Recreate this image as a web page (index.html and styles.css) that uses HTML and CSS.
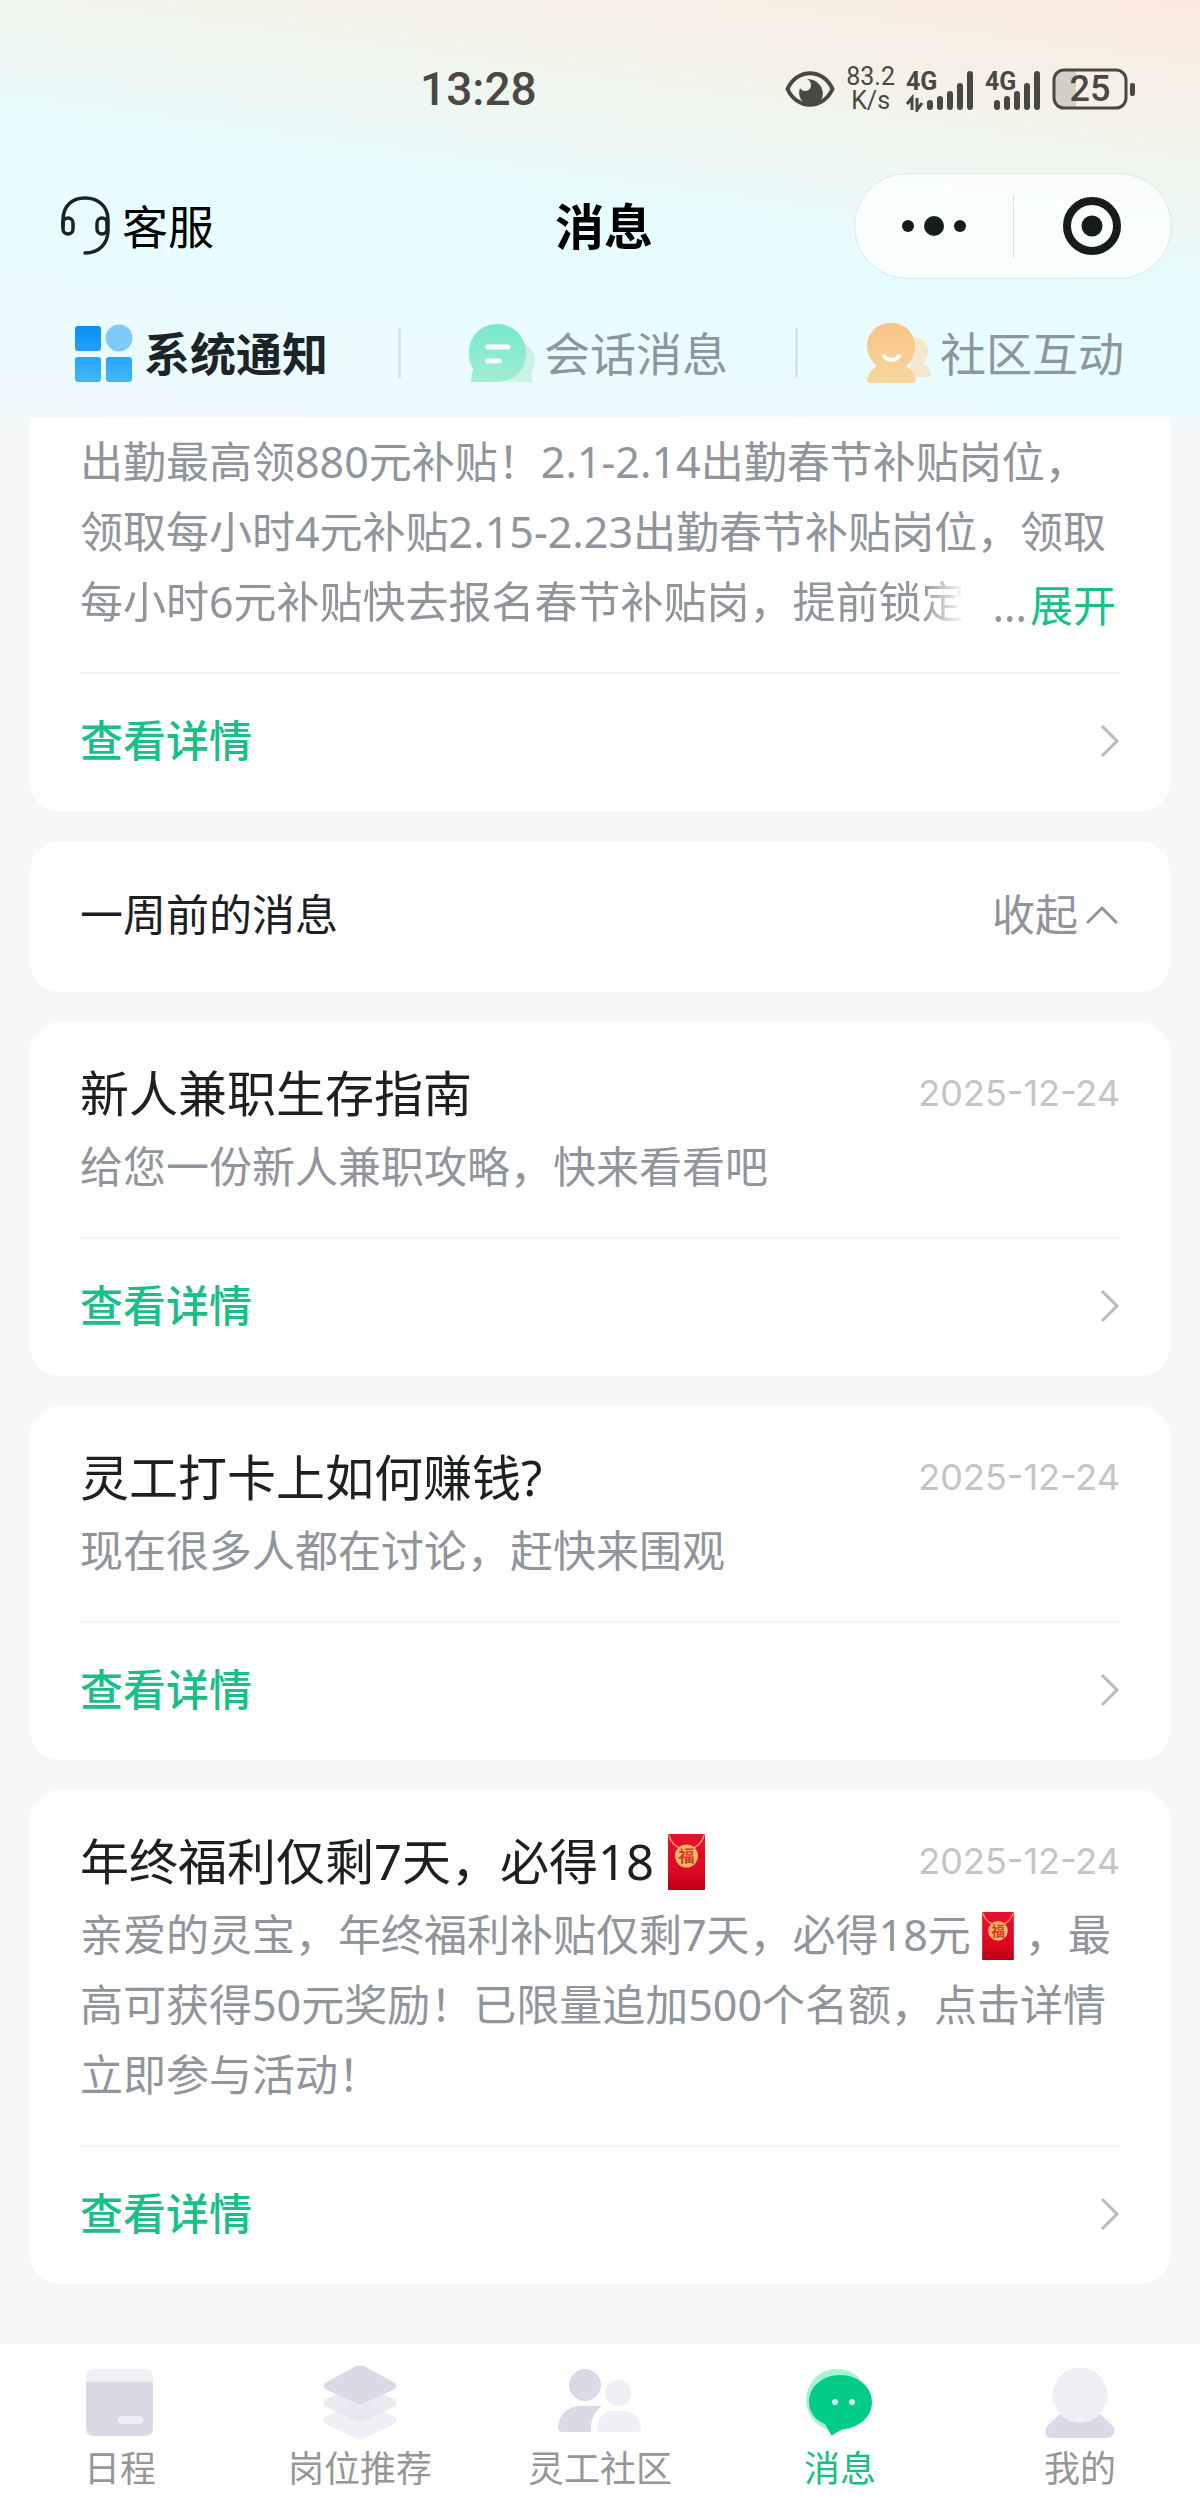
FILE: index.html
```html
<!DOCTYPE html>
<html lang="zh-CN">
<head>
<meta charset="utf-8">
<meta name="viewport" content="width=device-width, initial-scale=1">
<title>消息</title>
<link rel="stylesheet" href="styles.css">
</head>
<body>
<svg class="sprite" aria-hidden="true">
  <defs>
    <linearGradient id="packet-red" x1="0" y1="0" x2="0" y2="1">
      <stop offset="0" stop-color="#e8112f"/><stop offset="0.7" stop-color="#dd0722"/><stop offset="1" stop-color="#b80013"/>
    </linearGradient>
    <symbol id="packet" viewBox="0 0 37 56">
      <rect width="37" height="56" rx="1" fill="url(#packet-red)"/>
      <path d="M1 1C3 10 10 15 18.500 15S34 10 36 1" fill="none" stroke="#f0945c" stroke-width="1.500"/>
      <circle cx="18.500" cy="22" r="11.500" fill="#fdb768"/>
      <text x="18.500" y="28" text-anchor="middle" font-size="16" font-weight="700" fill="#d8381c">福</text>
    </symbol>
    <symbol id="chevron" viewBox="0 0 20 34">
      <path d="M2 2l15 15L2 32" fill="none" stroke="#b9bbbd" stroke-width="3"/>
    </symbol>
  </defs>
</svg>
<div class="app">
  <header class="header">
    <div class="status">
      <time class="status-time">13:28</time>
      <div class="status-icons">
        <svg width="50" height="40" viewBox="0 0 50 40" aria-hidden="true">
          <path d="M2.500 20C12 -1 38 -1 47.500 20C38 41 12 41 2.500 20Z" fill="none" stroke="#4a4843" stroke-width="4"/>
          <path d="M22 10c6 3 5 11-1 12-3 0-5-1-6-3-3 8 2 17 11 17s14-8 11-16c-2-6-8-10-15-10z" fill="#4a4843"/>
        </svg>
        <div class="speed"><span>83.2</span><span>K/s</span></div>
        <svg width="68" height="46" viewBox="0 0 68 46" aria-hidden="true">
          <g stroke="#4a4843" stroke-width="6" stroke-linecap="round"><path d="M24 37v4M34 33v8M44 28v13M54 20v21M64 8v33"/></g>
          <path d="M1 38l5-6v12M11 32v12l5-7" fill="none" stroke="#4a4843" stroke-width="3"/>
          <text x="0" y="24" class="net">4G</text>
        </svg>
        <svg width="56" height="46" viewBox="0 0 56 46" aria-hidden="true">
          <g stroke="#4a4843" stroke-width="6" stroke-linecap="round"><path d="M12 37v4M22 33v8M32 28v13M42 20v21M52 8v33"/></g>
          <text x="0" y="24" class="net">4G</text>
        </svg>
        <svg width="84" height="46" viewBox="0 0 84 46" aria-hidden="true">
          <path d="M14 3H24V43H14C7 43 3 38 3 32V14C3 8 7 3 14 3Z" fill="#d2cfc7"/>
          <rect x="2" y="4" width="72" height="38" rx="10" fill="none" stroke="#4a4843" stroke-width="3"/>
          <rect x="78" y="17" width="5" height="13" rx="2" fill="#4a4843"/>
          <text x="38" y="35" class="charge">25</text>
        </svg>
      </div>
    </div>
    <div class="nav">
      <a class="service" href="#">
        <svg width="50" height="60" viewBox="0 0 50 60" fill="none" stroke="#1a2225" stroke-width="3.500" stroke-linecap="round" aria-hidden="true">
          <path d="M3 30V24C3 10 12 2 25 2S48 10 48 24V34C48 48 39 57 25 57"/>
          <rect x="3" y="22" width="10" height="16" rx="5"/><rect x="37" y="22" width="10" height="16" rx="5"/>
        </svg>
        <span>客服</span>
      </a>
      <h1 class="title">消息</h1>
      <div class="capsule">
        <button type="button" aria-label="更多">
          <svg width="64" height="24" viewBox="0 0 64 24" fill="#191b1b"><circle cx="6" cy="12" r="6"/><circle cx="32" cy="12" r="10"/><circle cx="58" cy="12" r="6"/></svg>
        </button>
        <span class="capsule-line"></span>
        <button type="button" aria-label="关闭">
          <svg width="60" height="60" viewBox="0 0 60 60"><circle cx="30" cy="30" r="25" fill="none" stroke="#191b1b" stroke-width="8"/><circle cx="30" cy="30" r="10.500" fill="#191b1b"/></svg>
        </button>
      </div>
    </div>
    <nav class="tabs">
      <a class="tab tab-active" href="#">
        <svg width="62" height="60" viewBox="0 0 62 60" aria-hidden="true">
          <defs><linearGradient id="blue" x1="0" y1="0" x2="0" y2="60" gradientUnits="userSpaceOnUse"><stop offset="0" stop-color="#078dfb"/><stop offset="1" stop-color="#40b9f8"/></linearGradient></defs>
          <g fill="url(#blue)"><rect x="1" y="3" width="26" height="25" rx="3"/><rect x="1" y="34" width="26" height="25" rx="3"/><rect x="32" y="34" width="26" height="25" rx="3"/></g>
          <circle cx="45" cy="15" r="13.500" fill="#7fcafb"/>
        </svg>
        <span>系统通知</span>
      </a>
      <span class="tab-line"></span>
      <a class="tab" href="#">
        <svg width="68" height="60" viewBox="0 0 68 60" aria-hidden="true">
          <defs><linearGradient id="mint" x1="0" y1="0" x2="0" y2="1"><stop offset="0" stop-color="#78e8d0"/><stop offset="1" stop-color="#a2eed0"/></linearGradient></defs>
          <path d="M50 18c11 2 17 11 17 20 0 5-2 9-4 12l2 9H40z" fill="#c8f4e8"/>
          <path d="M29 1C45 1 58 13 58 30S46 59 29 59H4c-1 0-1-1-1-2l2-11C2 41 1 36 1 30 1 13 13 1 29 1Z" fill="url(#mint)"/>
          <path d="M20 24H40M20 38H31" stroke="#fff" stroke-width="5" stroke-linecap="round"/>
        </svg>
        <span>会话消息</span>
      </a>
      <span class="tab-line"></span>
      <a class="tab" href="#">
        <svg width="66" height="62" viewBox="0 0 66 62" aria-hidden="true">
          <defs><linearGradient id="amber" x1="0" y1="0" x2="0" y2="62" gradientUnits="userSpaceOnUse"><stop offset="0" stop-color="#fac388"/><stop offset="1" stop-color="#f5d89c"/></linearGradient></defs>
          <path d="M46 15c10 0 16 6 16 14 0 6-2 9-5 13 5 3 7 6 8 10 0 2-1 3-3 3H44z" fill="#f3e8cd"/>
          <path d="M25 1c14 0 24 10 24 23 0 9-3 15-9 20 5 3 9 8 10 14 0 2-1 3-3 3H4c-2 0-3-1-3-3 1-6 5-11 10-14C5 39 1 33 1 24 1 11 11 1 25 1Z" fill="url(#amber)"/>
          <path d="M18 34c3 5 12 5 15 0" fill="none" stroke="#fff" stroke-width="4" stroke-linecap="round"/>
        </svg>
        <span>社区互动</span>
      </a>
    </nav>
  </header>

  <main class="list">
    <article class="card card-cut">
      <p class="body">出勤最高领880元补贴！2.1-2.14出勤春节补贴岗位，<br>领取每小时4元补贴2.15-2.23出勤春节补贴岗位，领取</p>
      <div class="body last-line">
        <span class="fade">每小时6元补贴快去报名春节补贴岗，提前锁定</span>
        <span class="more">...<button type="button">展开</button></span>
      </div>
      <a class="detail" href="#"><span>查看详情</span><svg width="20" height="34" aria-hidden="true"><use href="#chevron"/></svg></a>
    </article>

    <section class="card group">
      <h2>一周前的消息</h2>
      <button type="button" class="fold">收起<svg width="32" height="20" viewBox="0 0 32 20" aria-hidden="true"><path d="M1 18L16 3l15 15" fill="none" stroke="#909399" stroke-width="3"/></svg></button>
    </section>

    <article class="card">
      <div class="head"><h2>新人兼职生存指南</h2><time>2025-12-24</time></div>
      <p class="body">给您一份新人兼职攻略，快来看看吧</p>
      <a class="detail" href="#"><span>查看详情</span><svg width="20" height="34" aria-hidden="true"><use href="#chevron"/></svg></a>
    </article>

    <article class="card">
      <div class="head"><h2>灵工打卡上如何赚钱?</h2><time>2025-12-24</time></div>
      <p class="body">现在很多人都在讨论，赶快来围观</p>
      <a class="detail" href="#"><span>查看详情</span><svg width="20" height="34" aria-hidden="true"><use href="#chevron"/></svg></a>
    </article>

    <article class="card">
      <div class="head"><h2>年终福利仅剩7天，必得18<svg class="packet packet-large" role="img" aria-label="红包"><use href="#packet"/></svg></h2><time>2025-12-24</time></div>
      <p class="body">亲爱的灵宝，年终福利补贴仅剩7天，必得18元<svg class="packet" role="img" aria-label="红包"><use href="#packet"/></svg>，最<br>高可获得50元奖励！已限量追加500个名额，点击详情<br>立即参与活动！</p>
      <a class="detail" href="#"><span>查看详情</span><svg width="20" height="34" aria-hidden="true"><use href="#chevron"/></svg></a>
    </article>
  </main>

  <nav class="tabbar">
    <a href="#">
      <svg width="76" height="76" viewBox="0 0 76 76" aria-hidden="true">
        <path d="M4 18V12c0-5 3-8 8-8H63c5 0 8 3 8 8v6z" fill="#f0eff5"/>
        <path d="M4 17H71V63c0 5-3 8-8 8H12c-5 0-8-3-8-8z" fill="#dad9e6"/>
        <rect x="36" y="51" width="25" height="8" rx="4" fill="#f0eff5"/>
      </svg>
      <span>日程</span>
    </a>
    <a href="#">
      <svg width="76" height="76" viewBox="0 0 76 76" aria-hidden="true">
        <path d="M34 36L3 52c-2 2-2 5 0 7L34 73c3 2 5 2 8 0L73 59c2-2 2-5 0-7L42 36z" fill="#f0eff5"/>
        <path d="M34 19L3 35c-2 2-2 4 0 6L34 56c3 2 5 2 8 0L73 41c2-2 2-4 0-6L42 19z" fill="#e6e5ee" opacity=".8"/>
        <path d="M34 1L3 18c-2 2-2 4 0 6L34 38c3 2 5 2 8 0L73 24c2-2 2-4 0-6L42 1c-3-1-5-1-8 0z" fill="#dad9e6"/>
      </svg>
      <span>岗位推荐</span>
    </a>
    <a href="#">
      <svg width="84" height="76" viewBox="0 0 84 76" aria-hidden="true">
        <circle cx="27" cy="20" r="16" fill="#dad9e6"/>
        <path d="M23 41H44C36 47 32 56 33 67H5c-4 0-5-2-5-5C1 49 10 41 23 41Z" fill="#dad9e6"/>
        <circle cx="60" cy="28" r="13" fill="#f0eff5"/>
        <path d="M53 46H68c9 1 15 9 15 17 0 3-1 4-4 4H39C38 55 43 47 53 46Z" fill="#f0eff5"/>
      </svg>
      <span>灵工社区</span>
    </a>
    <a href="#" class="current">
      <svg width="76" height="76" viewBox="0 0 76 76" aria-hidden="true">
        <circle cx="35" cy="35" r="31" fill="#a5f3d3"/>
        <path d="M38 10C56 10 70 22 70 37S57 63 41 64L32 69c-2 2-3 2-4-1L23 59C13 55 7 47 7 37 7 22 20 10 38 10Z" fill="#02cd87"/>
        <circle cx="33" cy="37" r="3" fill="#c8fbe8"/><circle cx="50" cy="37" r="3" fill="#c8fbe8"/>
      </svg>
      <span>消息</span>
    </a>
    <a href="#">
      <svg width="76" height="76" viewBox="0 0 76 76" aria-hidden="true">
        <path d="M18 49H58L70 60c5 5 2 13-5 13H10C3 73 1 65 6 60Z" fill="#dad9e6"/>
        <circle cx="38" cy="30" r="27.500" fill="#f0eff5"/>
      </svg>
      <span>我的</span>
    </a>
  </nav>
</div>
</body>
</html>
```

FILE: styles.css
```css
* { box-sizing: border-box; }

body {
  margin: 0;
  background: #f5f7f9;
  color: #1d2022;
  font-family: "Noto Sans", "Noto Sans CJK SC", sans-serif;
  font-size: 43px;
  line-height: 70px;
}

h1, h2, p { margin: 0; font-weight: 400; }
a { color: inherit; text-decoration: none; }
svg { display: block; flex: none; }

button {
  padding: 0;
  border: 0;
  background: none;
  color: inherit;
  font: inherit;
}

.sprite { position: absolute; width: 0; height: 0; }

.app {
  display: flex;
  flex-direction: column;
  min-height: 100vh;
}

/* Header */
.header {
  background: linear-gradient(188deg, #fdeade 0%, #f3f3ea 24%, #e6fdff 52%, #e9fcff 72%, #f0fafd 100%);
}

.status {
  display: flex;
  align-items: center;
  justify-content: space-between;
  height: 173px;
  padding: 4px 64px 0 35%;
  color: #4a4843;
  font-family: Roboto, sans-serif;
}

.status-time {
  font-size: 46px;
  font-weight: 500;
}

.status-icons {
  display: flex;
  align-items: center;
  gap: 11px;
}

.speed {
  display: flex;
  flex-direction: column;
  align-items: center;
  font-size: 25px;
  line-height: 24px;
}

.net { font: 700 25px Roboto, sans-serif; fill: #4a4843; }
.charge { font: 500 36px Roboto, sans-serif; fill: #4a4843; text-anchor: middle; }

.nav {
  display: grid;
  grid-template-columns: 1fr auto 1fr;
  align-items: center;
  height: 106px;
  padding: 0 28px 0 36px;
}

.service {
  display: flex;
  align-items: center;
  gap: 12px;
  padding-left: 24px;
  font-size: 46px;
  color: #000;
}

.title {
  color: #000;
  font-size: 49px;
  font-weight: 700;
}

.capsule {
  display: flex;
  align-items: center;
  justify-self: end;
  width: 318px;
  height: 106px;
  border: 1px solid #dfe6e5;
  border-radius: 53px;
  background: rgba(255, 255, 255, 0.75);
}

.capsule button {
  flex: 1;
  display: flex;
  align-items: center;
  justify-content: center;
}

.capsule-line {
  width: 1px;
  height: 64px;
  background: #dde2e2;
}

.tabs {
  display: flex;
  align-items: center;
  height: 138px;
  padding: 10px 8px 0 4px;
}

.tab {
  flex: 1;
  display: flex;
  align-items: center;
  justify-content: center;
  gap: 8px;
  color: #8b979d;
  font-size: 46px;
}

.tab-active { color: #1b2427; font-weight: 700; }

.tab-line {
  width: 3px;
  height: 50px;
  background: #d8e6eb;
}

/* Message list */
.list {
  display: flex;
  flex-direction: column;
  gap: 30px;
  flex: 1;
  padding: 0 30px 60px;
}

.card {
  padding: 36px 50px 0;
  border-radius: 30px;
  background: #fff;
}

.card-cut {
  padding-top: 10px;
  border-radius: 0 0 30px 30px;
}

.head {
  display: flex;
  align-items: center;
  justify-content: space-between;
  margin-bottom: 4px;
}

.head h2 { font-size: 49px; }

.head time {
  color: #c3c5c7;
  font-family: Inter, sans-serif;
  font-size: 36px;
}

.body { color: #90959c; }

.packet {
  display: inline-block;
  width: 32px;
  height: 48px;
  margin: 0 11px;
  vertical-align: -9px;
}

.packet-large {
  width: 37px;
  height: 56px;
  margin: 0 14px;
  vertical-align: -10px;
}

.last-line {
  display: flex;
  justify-content: space-between;
}

.fade {
  -webkit-mask-image: linear-gradient(270deg, transparent, #000 43px);
  mask-image: linear-gradient(270deg, transparent, #000 43px);
}

.more {
  display: flex;
  gap: 3px;
  height: 70px;
  padding: 4px 4px 0 0;
}

.more button { color: #10c489; }

.detail {
  display: flex;
  align-items: center;
  justify-content: space-between;
  height: 139px;
  margin-top: 35px;
  padding-bottom: 4px;
  border-top: 2px solid #f4f5f6;
  color: #18c088;
  font-weight: 500;
}

.group {
  display: flex;
  align-items: center;
  justify-content: space-between;
  height: 151px;
  padding-top: 0;
  padding-bottom: 4px;
}

.group h2 { font-size: 43px; }

.fold {
  display: flex;
  align-items: center;
  gap: 8px;
  padding-right: 2px;
  color: #909399;
}

/* Bottom bar */
.tabbar {
  display: flex;
  height: 159px;
  padding-top: 21px;
  background: #fff;
  color: #969696;
  font-size: 36px;
  line-height: 52px;
}

.tabbar a {
  flex: 1;
  display: flex;
  flex-direction: column;
  align-items: center;
  gap: 2px;
}

.tabbar .current { color: #14c083; }
```
